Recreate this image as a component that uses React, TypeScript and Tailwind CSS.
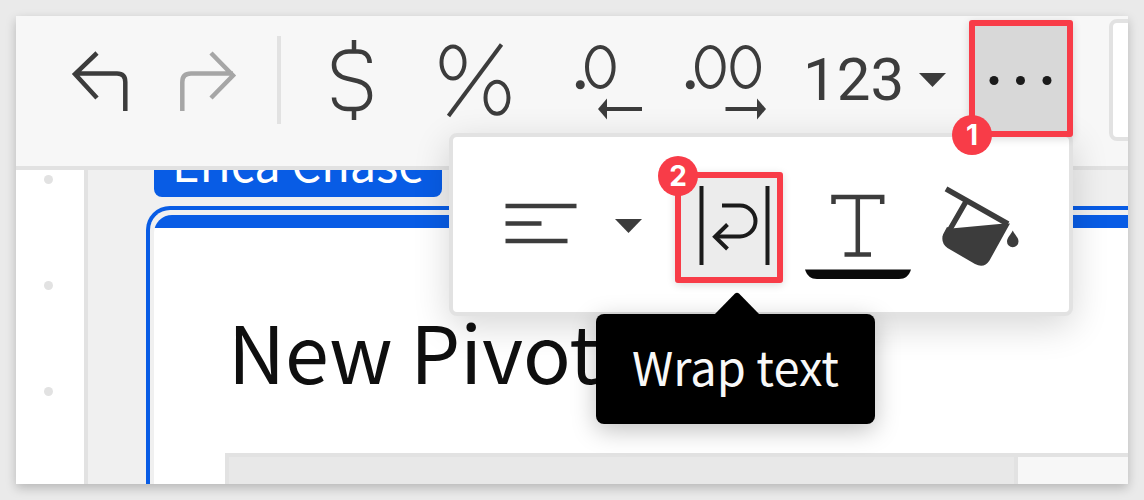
import type { ReactNode } from 'react';

const ICON = '#3c3c3c';

function ToolButton({ label, children, disabled }: { label: string; children: ReactNode; disabled?: boolean }) {
  return (
    <button type="button" aria-label={label} disabled={disabled} className="flex h-full shrink-0 items-center justify-center">
      {children}
    </button>
  );
}

function Caret() {
  return (
    <svg width="29" height="16" viewBox="0 0 29 16" aria-hidden="true">
      <path d="M1 1 H28 L14.5 15 Z" fill={ICON} />
    </svg>
  );
}

function AlignIcon() {
  return (
    <svg width="72" height="46" viewBox="505 203 72 46" fill="none" stroke={ICON} strokeWidth="4.5" aria-hidden="true">
      <path d="M505.5 206 H576.5 M505.5 223.5 H541.5 M505.5 241 H567.5" />
    </svg>
  );
}

function WrapIcon() {
  return (
    <svg width="96" height="99" viewBox="681 178 96 99" fill="none" stroke="#1b1b1b" strokeWidth="4" aria-hidden="true">
      <path d="M701.5 186 V265 M767.5 186 V265" />
      <path d="M722 205.5 H740 A15.5 15.5 0 0 1 740 236.5 H715" />
      <path d="M727.5 224.5 L715 236.7 L727.5 249" />
    </svg>
  );
}

function TextColorIcon() {
  return (
    <svg width="106" height="99" viewBox="805 178 106 99" overflow="visible" fill="none" stroke={ICON} strokeWidth="4.5" aria-hidden="true">
      <path d="M833.5 204 V197 H882.2 V204 M857.8 197 V254.5 M844.5 254.5 H871" />
      <path d="M805 269.500 H911 C909 276 905 279 899 279 H817 C811 279 807 276 805 269.500 Z" fill="#0a0a0a" stroke="none" />
    </svg>
  );
}

function FillIcon() {
  return (
    <svg width="106" height="99" viewBox="933 178 106 99" aria-hidden="true">
      <path d="M946 188.800 L1008 224 M966 201.500 L945 238" fill="none" stroke={ICON} strokeWidth="5.5" />
      <path
        d="M951 228.400 L1002 223.800 L1010 223.500 L989.500 260.500 Q984 268.800 975 264 L947.500 248 Q940.500 243 943 234.500 L947 227 Z"
        fill={ICON}
      />
      <path d="M1012.700 230.500 C1014.500 234.500 1018.500 237.500 1018.500 241.500 A5.700 5.700 0 0 1 1007 241.500 C1007 237.500 1011 234.500 1012.700 230.500 Z" fill={ICON} />
    </svg>
  );
}

function OverflowMenu() {
  return (
    <div className="absolute top-[113px] right-0 flex rounded-lg border-4 border-[#e2e2e2] bg-white pt-[35px] pr-[30px] pb-[29px] pl-[52px] shadow-[0_10px_36px_rgba(0,0,0,0.16)]">
      <button type="button" aria-label="Align" className="mr-8 flex w-[138px] items-center justify-between pb-1">
        <AlignIcon />
        <Caret />
      </button>
      <div className="relative">
        <button
          type="button"
          aria-label="Wrap text"
          className="block rounded-[3px] border-[6px] border-[#f83c48] bg-[#ececec] shadow-[0_2px_8px_rgba(0,0,0,0.14)]"
        >
          <WrapIcon />
        </button>
        <span className="absolute -top-4 -left-[17px] flex h-10 w-10 items-center justify-center rounded-full bg-[#f83c48] font-['Inter',sans-serif] text-[28px] leading-none font-bold text-white">
          2
        </span>
        <div
          role="tooltip"
          className="absolute top-[142px] -left-[79px] z-30 rounded-lg bg-black px-9 pt-5 pb-[26px] font-['Noto_Sans_CJK_SC',sans-serif] text-[47px] leading-[64px] whitespace-nowrap text-[#f8f8f8] shadow-[0_6px_24px_rgba(0,0,0,0.25)]"
        >
          <svg className="absolute -top-[22px] left-[118px]" width="46" height="23" viewBox="0 0 46 23" aria-hidden="true">
            <path d="M0 23 L21 1.500 Q23 0 25 1.500 L46 23 Z" fill="#000" />
          </svg>
          Wrap text
        </div>
      </div>
      <button type="button" aria-label="Text color" className="ml-[22px] flex items-center">
        <TextColorIcon />
      </button>
      <button type="button" aria-label="Fill color" className="ml-[22px] flex items-center">
        <FillIcon />
      </button>
    </div>
  );
}

function Toolbar() {
  return (
    <div className="relative z-10 shrink-0 border-b-4 border-[#e2e2e2] bg-[#f7f7f7] pb-[22px]">
      <div className="flex h-32 pl-[31px]">
        <ToolButton label="Undo">
          <svg width="106" height="128" viewBox="47 16 106 128" fill="none" stroke={ICON} strokeWidth="4.5" aria-hidden="true">
            <path d="M97 53 L75 74 L97 98 M75 73.500 H117 Q125.300 73.500 125.300 82 V111" />
          </svg>
        </ToolButton>
        <ToolButton label="Redo" disabled>
          <svg width="106" height="128" viewBox="153 16 106 128" fill="none" stroke="#a6a6a6" strokeWidth="4.500" aria-hidden="true">
            <path d="M211 53 L233 75.500 L211 98 M233 73.500 H191 Q182.300 73.500 182.300 82 V111" />
          </svg>
        </ToolButton>
        <div className="mt-5 mr-2.5 ml-[18px] h-[88px] w-1 shrink-0 bg-[#e2e2e2]" />
        <ToolButton label="Currency">
          <svg width="122" height="128" viewBox="291 16 122 128" fill="none" stroke={ICON} strokeWidth="4.500" aria-hidden="true">
            <path d="M354 40 V51 M354 109 V120" />
            <path d="M369.700 63 C369.700 56 365 51.500 358 51.500 H349 C340 51.500 334 57.500 334 65 C334 73.500 340 77 347 78.500 L357.500 81 C365.500 83 370 88 370 95.500 C370 103 364 109 356 109 H347.500 C340 109 334 104.500 334 97.500" />
          </svg>
        </ToolButton>
        <ToolButton label="Percent">
          <svg width="122" height="128" viewBox="413 16 122 128" fill="none" stroke={ICON} strokeWidth="4" aria-hidden="true">
            <ellipse cx="453" cy="62.500" rx="11.500" ry="16" />
            <ellipse cx="497" cy="97.700" rx="11.500" ry="16" />
            <path d="M501.500 44.500 L448.500 116" />
          </svg>
        </ToolButton>
        <ToolButton label="Decrease decimals">
          <svg width="122" height="128" viewBox="535 16 122 128" fill="none" stroke={ICON} strokeWidth="4" aria-hidden="true">
            <ellipse cx="600.300" cy="67" rx="13.300" ry="20" />
            <circle cx="580.300" cy="84.700" r="4.500" fill={ICON} stroke="none" />
            <path d="M605 109 H642" />
            <path d="M598 109 L607 98.500 V119.500 Z" fill={ICON} stroke="none" />
          </svg>
        </ToolButton>
        <ToolButton label="Increase decimals">
          <svg width="122" height="128" viewBox="657 16 122 128" fill="none" stroke={ICON} strokeWidth="4" aria-hidden="true">
            <ellipse cx="710.300" cy="67" rx="13.300" ry="20" />
            <ellipse cx="745.700" cy="67" rx="13.300" ry="20" />
            <circle cx="690.300" cy="84.700" r="4.500" fill={ICON} stroke="none" />
            <path d="M725.500 109 H758" />
            <path d="M766 109 L757 98.500 V119.500 Z" fill={ICON} stroke="none" />
          </svg>
        </ToolButton>
        <button
          type="button"
          className="flex w-[190px] shrink-0 items-center justify-between pr-[22px] pl-6 font-['Roboto',sans-serif] text-[60px] leading-none text-[#3c3c3c]"
        >
          123
          <Caret />
        </button>
        <div className="relative mt-1 h-[117px] w-[104px] shrink-0">
          <OverflowMenu />
          <button
            type="button"
            aria-label="More"
            className="relative flex h-full w-full items-center justify-center rounded-[3px] border-[6px] border-[#f83c48] bg-[#d8d8d8] shadow-[0_2px_8px_rgba(0,0,0,0.14)]"
          >
            <svg width="92" height="12" viewBox="0 0 92 12" fill="#1b1b1b" aria-hidden="true">
              <circle cx="19" cy="7.500" r="4.500" />
              <circle cx="45.500" cy="7.500" r="4.500" />
              <circle cx="72" cy="7.500" r="4.500" />
            </svg>
          </button>
          <span className="absolute -bottom-[18px] -left-[17px] z-20 flex h-10 w-10 items-center justify-center rounded-full bg-[#f83c48] font-['Inter',sans-serif] text-[28px] leading-none font-bold text-white">
            1
          </span>
        </div>
        <input aria-label="Formula" className="mt-[3px] ml-9 h-[122px] w-16 shrink-0 rounded-lg border-4 border-[#e2e2e2] bg-white" />
      </div>
    </div>
  );
}

export default function App() {
  return (
    <div className="h-screen bg-[#eaeaea] p-4">
      <main className="h-full shadow-[0_4px_10px_rgba(0,0,0,0.22)]">
        <div className="flex h-full flex-col overflow-hidden bg-white">
          <Toolbar />
          <div className="flex min-h-0 flex-1">
            <div className="flex w-[72px] shrink-0 flex-col items-center gap-[97px] overflow-hidden border-r-4 border-[#e2e2e2] pt-[5px] pr-1">
              <span className="h-[9px] w-[9px] shrink-0 rounded-full bg-[#e2e2e2]" />
              <span className="h-[9px] w-[9px] shrink-0 rounded-full bg-[#e2e2e2]" />
              <span className="h-[9px] w-[9px] shrink-0 rounded-full bg-[#e2e2e2]" />
            </div>
            <div className="flex min-w-0 flex-1 flex-col items-start overflow-hidden bg-[#f0f0f0] pl-[58px]">
              <div className="-mt-10 ml-2 shrink-0 rounded-lg bg-[#085ce5] px-[18px] pb-1 font-['Noto_Sans_CJK_SC',sans-serif] text-[47px] leading-[63px] whitespace-nowrap text-white">
                Erica Chase
              </div>
              <section className="mt-[9px] flex min-h-0 w-full flex-1 flex-col rounded-tl-[24px] border-t-4 border-l-4 border-[#085ce5] pt-[5px] pl-1">
                <div className="flex min-h-0 flex-1 flex-col overflow-hidden rounded-tl-[18px] bg-white">
                  <div className="h-[13px] shrink-0 bg-[#085ce5]" />
                  <h1 className="shrink-0 pt-[74px] pb-[55px] pl-[74px] font-['Noto_Sans_CJK_SC',sans-serif] text-[79px] leading-[96px] whitespace-nowrap text-[#0f0f0f]">
                    New Pivot
                  </h1>
                  <div className="ml-[71px] flex min-h-0 flex-1 border-t-4 border-l-4 border-[#e2e2e2]">
                    <div className="flex-1 border-r-4 border-[#e2e2e2] bg-[#e8e8e8]" />
                    <div className="w-[110px] bg-[#f7f7f7]" />
                  </div>
                </div>
              </section>
            </div>
          </div>
        </div>
      </main>
    </div>
  );
}
